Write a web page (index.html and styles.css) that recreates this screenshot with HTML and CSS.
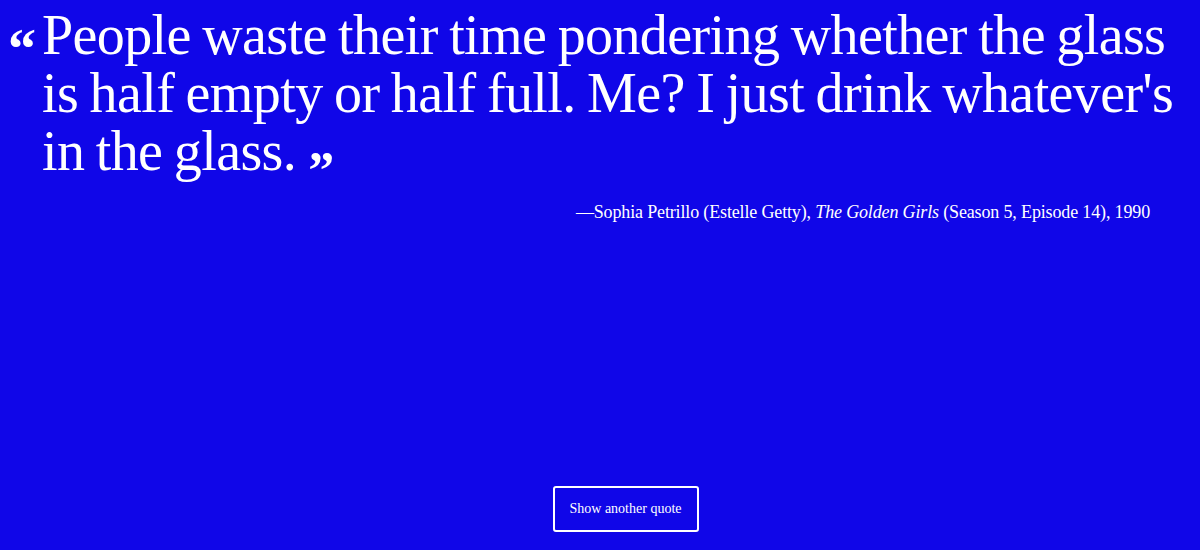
FILE: index.html
```html
<!DOCTYPE html>
<html>
<head>
<meta charset="utf-8">
<link rel="stylesheet" href="styles.css">
</head>
<body>
<main class="page">
  <figure class="quote">
    <blockquote class="quote__body">
      <span class="quote__open">&ldquo;</span>
      <p class="quote__text">People waste their time pondering whether the glass is half empty or half full. Me? I just drink whatever's in the glass.<span class="quote__close">&rdquo;</span></p>
    </blockquote>
    <figcaption class="quote__cite">&mdash;Sophia Petrillo (Estelle Getty), <em>The Golden Girls</em> (Season 5, Episode 14), 1990</figcaption>
  </figure>
  <div class="actions">
    <button class="btn" type="button">Show another quote</button>
  </div>
</main>
</body>
</html>
```

FILE: styles.css
```css
html, body {
  margin: 0;
  padding: 0;
  height: 100%;
}
body {
  background: #1006e8;
  color: #ffffff;
  font-family: "Liberation Serif", "DejaVu Serif", serif;
}
.page {
  height: 550px;
  display: flex;
  flex-direction: column;
  justify-content: space-between;
  box-sizing: border-box;
  padding: 0 0 18px 0;
}
.quote {
  margin: 0;
  padding: 6px 2px 0 8px;
}
.quote__body {
  margin: 0;
  display: flex;
  align-items: flex-start;
}
.quote__open {
  flex: 0 0 34px;
  font-size: 56px;
  line-height: 1;
  padding-top: 15px;
  font-weight: bold;
}
.quote__text {
  margin: 0;
  font-size: 56px;
  line-height: 58px;
  letter-spacing: -0.6px;
  word-spacing: -2px;
}
.quote__close {
  font-size: 52px;
  font-weight: bold;
  margin-left: 12px;
  line-height: 0;
  vertical-align: -18px;
  word-spacing: 0;
}
.quote__cite {
  text-align: right;
  font-size: 18px;
  letter-spacing: -0.15px;
  margin-top: 22px;
  padding-right: 48px;
}
.actions {
  display: flex;
  justify-content: center;
  padding-left: 51px;
}
.btn {
  font-family: "Liberation Serif", serif;
  font-size: 14px;
  color: #ffffff;
  background: transparent;
  border: 2px solid #ffffff;
  border-radius: 3px;
  width: 146px;
  height: 46px;
  cursor: pointer;
}
```
